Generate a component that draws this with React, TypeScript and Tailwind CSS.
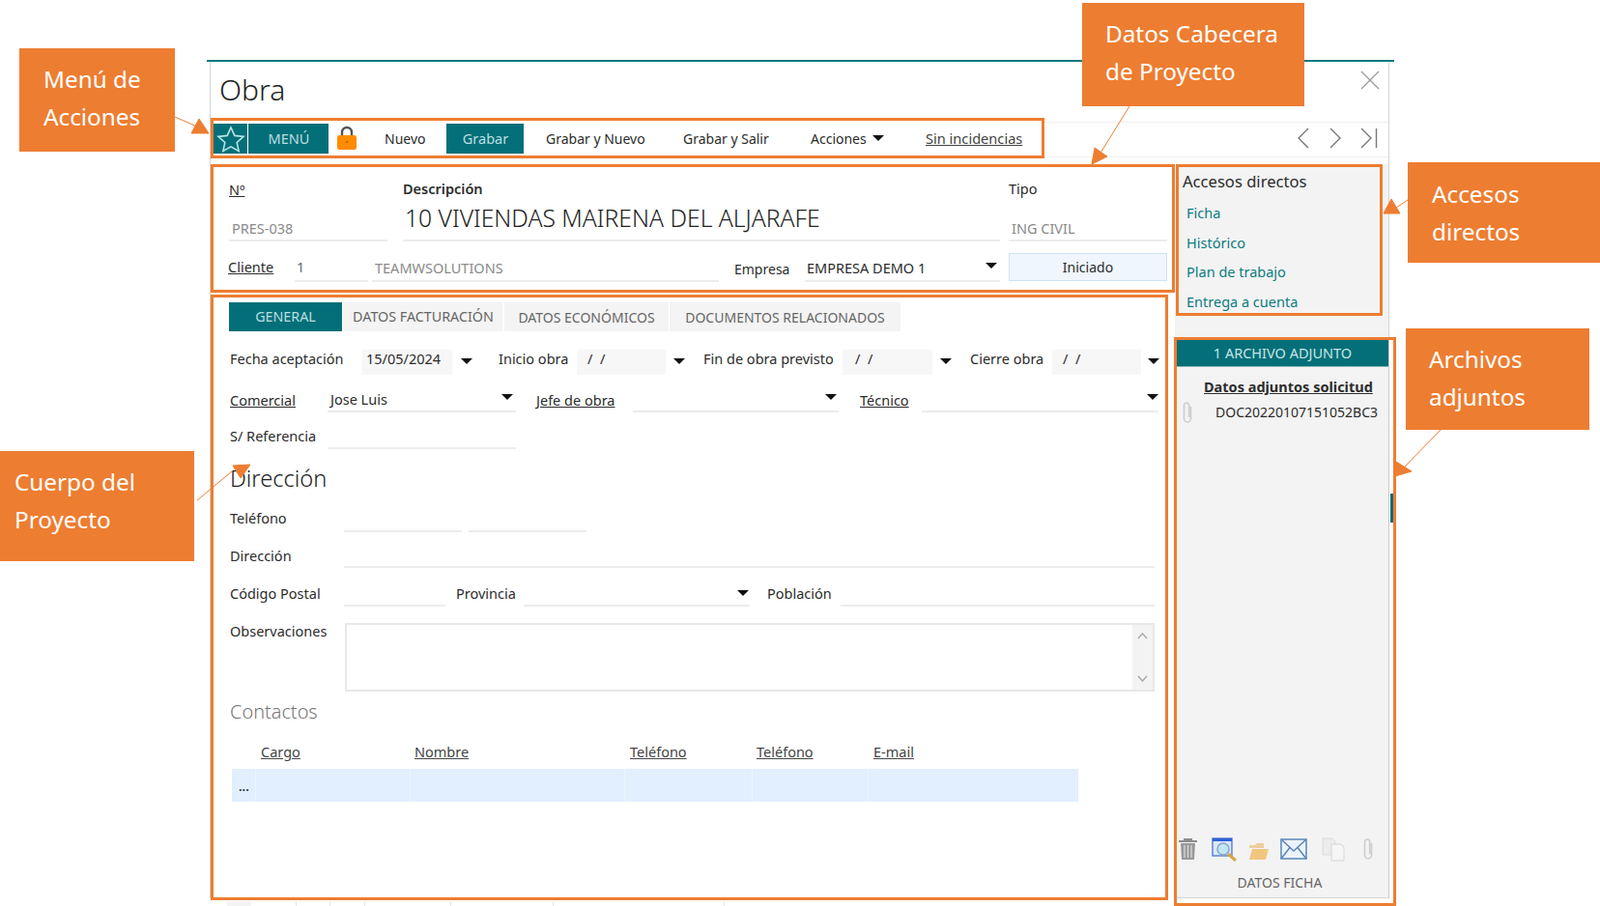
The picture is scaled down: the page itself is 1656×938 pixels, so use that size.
import React from "react";

const Tri = () => (
  <span className="block h-0 w-0 shrink-0 border-x-[6px] border-t-[6px] border-x-transparent border-t-[#111]" />
);

const Chevron = ({ d }: { d: string }) => (
  <svg width="16" height="22" viewBox="0 0 16 22" fill="none" stroke="#777" strokeWidth="1.4" className="block">
    <path d={d} />
  </svg>
);

const Clip = ({ className }: { className?: string }) => (
  <svg width="12" height="24" viewBox="0 0 12 24" fill="none" stroke="#cdcdcd" strokeWidth="1.6" className={className}>
    <path d="M9.5 6 V18 a3.500 4 0 0 1 -7 0 V5 a2.600 3 0 0 1 5.200 0 V17" />
  </svg>
);

const Arrows = () => (
  <svg className="pointer-events-none absolute left-0 top-0 z-20" width="1656" height="938" viewBox="0 0 1656 938">
    <g fill="#ed7d31" stroke="#ed7d31" strokeWidth="1">
      <line x1="181" y1="121" x2="204" y2="131" />
      <polygon points="198,138 216,138 206,123" />
      <line x1="1169" y1="110" x2="1138" y2="160" />
      <polygon points="1130,170 1146,162 1133,153" />
      <line x1="1457" y1="207" x2="1445" y2="215" />
      <polygon points="1432,221 1449,221 1440,206" />
      <line x1="1491" y1="445" x2="1454" y2="483" />
      <polygon points="1444,493 1461,488 1445,478" />
      <line x1="204" y1="518" x2="240" y2="488" />
      <polygon points="259,481 241,482 249,495" />
    </g>
  </svg>
);

export default function App() {
  return (
    <div className="relative h-[938px] w-[1656px] overflow-hidden bg-white font-['Open_Sans',sans-serif] text-[14.5px] text-[#2c2c2c]">
      {/* Callouts */}
      <div className="absolute left-[20px] top-[50px] z-20 h-[107px] w-[161px] bg-[#ed7d31] pl-[25px] pt-[12px] text-[24.3px] leading-[39px] text-white">
        Menú de<br />Acciones
      </div>
      <div className="absolute left-[1120px] top-[3px] z-20 h-[107px] w-[230px] bg-[#ed7d31] pl-[24px] pt-[12px] text-[24.3px] leading-[39px] text-white">
        Datos Cabecera<br />de Proyecto
      </div>
      <div className="absolute left-[1457px] top-[168px] z-20 h-[104px] w-[199px] bg-[#ed7d31] pl-[25px] pt-[13px] text-[24.3px] leading-[39px] text-white">
        Accesos<br />directos
      </div>
      <div className="absolute left-[1455px] top-[340px] z-20 h-[105px] w-[190px] bg-[#ed7d31] pl-[24px] pt-[12px] text-[24.3px] leading-[39px] text-white">
        Archivos<br />adjuntos
      </div>
      <div className="absolute left-0 top-[467px] z-20 h-[114px] w-[201px] bg-[#ed7d31] pl-[15px] pt-[12px] text-[24.3px] leading-[39px] text-white">
        Cuerpo del<br />Proyecto
      </div>
      <Arrows />

      {/* Window */}
      <div className="ml-[214px] pt-[62px]">
        <div className="h-[2px] w-[1229px] bg-[#0a7a80]" />
        <div className="ml-[3px] h-[866px] w-[1221px] border-x border-x-[#d4d4d4]">
          {/* Title */}
          <div className="flex h-[58px] items-start justify-between">
            <div className="pl-[9px] pt-[9px] text-[30px] font-light leading-[40px] text-[#222]">Obra</div>
            <svg width="20" height="20" viewBox="0 0 20 20" stroke="#999" strokeWidth="1.2" className="mr-[9px] mt-[9px]">
              <path d="M1 1 L19 19 M19 1 L1 19" />
            </svg>
          </div>

          {/* Toolbar row */}
          <div className="flex h-[42px] text-[14px]">
            <div className="flex h-[42px] w-[863px] items-start border-[3px] border-[#ed7d31] pt-[3px]">
              <div className="flex h-[31px] w-[35px] shrink-0 items-center justify-center bg-[#046f78]">
                <svg width="30" height="28" viewBox="0 0 30 28" fill="none" stroke="#b9e4e4" strokeWidth="1.6">
                  <path d="M15 2 L18.8 10.4 L28 11.4 L21.2 17.5 L23.1 26.4 L15 21.8 L6.9 26.4 L8.8 17.5 L2 11.4 L11.2 10.4 Z" />
                </svg>
              </div>
              <div className="ml-px flex h-[31px] w-[83px] shrink-0 items-center justify-center pl-px bg-[#046f78] text-[14.5px] text-[#b9dfe0]">MENÚ</div>
              <svg width="20" height="25" viewBox="0 0 20 25" className="ml-[9px] mt-[2px] shrink-0">
                <path d="M5 11 V7 a5 5 0 0 1 10 0 V11" fill="none" stroke="#555" strokeWidth="2.4" />
                <rect x="0" y="10" width="20" height="15" rx="2.5" fill="#ff8c00" />
                <circle cx="10" cy="17" r="1" fill="#a85a00" />
              </svg>
              <div className="ml-[29px] flex h-[31px] w-[64px] shrink-0 items-center">Nuevo</div>
              <div className="flex h-[31px] w-[80px] shrink-0 items-center justify-center pl-px bg-[#046f78] text-[14.5px] text-[#b9dfe0]">Grabar</div>
              <div className="ml-[23px] flex h-[31px] w-[104px] shrink-0 items-center whitespace-nowrap">Grabar y Nuevo</div>
              <div className="ml-[38px] flex h-[31px] w-[90px] shrink-0 items-center whitespace-nowrap">Grabar y Salir</div>
              <div className="ml-[42px] flex h-[31px] w-[77px] shrink-0 items-center gap-[6px]">
                <span>Acciones</span>
                <span className="mb-[2px]"><Tri /></span>
              </div>
              <div className="ml-[42px] flex h-[31px] items-center whitespace-nowrap text-[14.6px] text-[#444] underline">Sin incidencias</div>
            </div>
            <div className="mt-[4px] flex h-[37px] flex-1 items-center justify-end gap-[17px] border-y border-y-[#efefef] pb-[4px] pr-[11px]">
              <Chevron d="M13 1 L3 11 L13 21" />
              <Chevron d="M3 1 L13 11 L3 21" />
              <svg width="19" height="22" viewBox="0 0 19 22" fill="none" stroke="#777" strokeWidth="1.4">
                <path d="M2 1 L12 11 L2 21 M17.5 1 V21" />
              </svg>
            </div>
          </div>

          {/* Main */}
          <div className="mt-[6px] flex">
            <div className="w-[998px] shrink-0">
              {/* Header data */}
              <div className="h-[133px] border-[3px] border-[#ed7d31]">
                <div className="flex pl-[16px] pt-[13px]">
                  <div className="w-[164px] shrink-0">
                    <div className="h-[18px] pt-px leading-[18px] underline">Nº</div>
                    <div className="flex h-[46px] items-end border-b-2 border-b-[#ececec] pb-[2px] pl-[3px] leading-[20px] text-[#8a8a8a]">PRES-038</div>
                  </div>
                  <div className="ml-[16px] w-[618px] shrink-0">
                    <div className="h-[18px] font-semibold leading-[18px]">Descripción</div>
                    <div className="flex h-[46px] items-end whitespace-nowrap border-b-2 border-b-[#ececec] pb-[6px] pl-[2px] text-[24.7px] font-light leading-[32px] text-[#222]">10 VIVIENDAS MAIRENA DEL ALJARAFE</div>
                  </div>
                  <div className="ml-[9px] w-[164px] shrink-0">
                    <div className="h-[18px] leading-[18px]">Tipo</div>
                    <div className="flex h-[46px] items-end border-b-2 border-b-[#ececec] pb-[2px] pl-[3px] leading-[20px] text-[#8a8a8a]">ING CIVIL</div>
                  </div>
                </div>
                <div className="mt-[12px] flex h-[30px] items-start pl-[15px]">
                  <div className="flex h-[30px] w-[69px] shrink-0 items-center underline">Cliente</div>
                  <div className="flex h-[30px] w-[76px] shrink-0 items-center border-b-2 border-b-[#ececec] pl-[2px] pt-px text-[#666]">1</div>
                  <div className="ml-[4px] flex h-[30px] w-[359px] shrink-0 items-center border-b-2 border-b-[#ececec] pl-[3px] pt-[3px] text-[#8a8a8a]">TEAMWSOLUTIONS</div>
                  <div className="ml-[16px] flex h-[30px] w-[73px] shrink-0 items-center pt-[2px] text-[14px]">Empresa</div>
                  <div className="flex h-[30px] w-[202px] shrink-0 items-center justify-between border-b-2 border-b-[#ececec] pl-[2px] pr-[3px] pt-[3px]">
                    <span>EMPRESA DEMO 1</span>
                    <span className="mb-[5px]"><Tri /></span>
                  </div>
                  <div className="ml-[9px] flex h-[29px] w-[164px] shrink-0 items-center justify-center border border-[#cfe3f3] bg-[#eff6fd] text-[14px]">Iniciado</div>
                </div>
              </div>

              {/* Project body */}
              <div className="mt-[2px] h-[627px] w-[991px] border-[3px] border-[#ed7d31]">
                <div className="ml-[16px] mt-[5px] flex h-[30px] text-[14px] text-[#666]">
                  <div className="flex w-[117px] items-center justify-center bg-[#046f78] text-[14.3px] text-[#b9dfe0]">GENERAL</div>
                  <div className="ml-px flex w-[165px] items-center justify-center whitespace-nowrap bg-[#f4f4f4] pl-px text-[14.3px]">DATOS FACTURACIÓN</div>
                  <div className="ml-[2px] flex w-[170px] items-center justify-center whitespace-nowrap bg-[#f4f4f4]">DATOS ECONÓMICOS</div>
                  <div className="ml-px flex w-[239px] items-center justify-center whitespace-nowrap bg-[#f4f4f4]">DOCUMENTOS RELACIONADOS</div>
                </div>

                <div className="ml-[17px] mt-[19px] flex h-[26px] items-center">
                  <div className="w-[137px] shrink-0 whitespace-nowrap pb-[6px]">Fecha aceptación</div>
                  <div className="flex h-[26px] w-[93px] shrink-0 items-center whitespace-nowrap bg-[#f7f7f7] pb-[6px] pl-[4px]">15/05/2024</div>
                  <span className="mb-[2px] ml-[9px]"><Tri /></span>
                  <div className="ml-[27px] w-[81px] shrink-0 whitespace-nowrap pb-[6px]">Inicio obra</div>
                  <div className="flex h-[26px] w-[92px] shrink-0 items-center whitespace-pre bg-[#f7f7f7] pb-[6px] pl-[11px]">/  /</div>
                  <span className="mb-[2px] ml-[8px]"><Tri /></span>
                  <div className="ml-[19px] w-[144px] shrink-0 whitespace-nowrap pb-[6px]">Fin de obra previsto</div>
                  <div className="flex h-[26px] w-[93px] shrink-0 items-center whitespace-pre bg-[#f7f7f7] pb-[6px] pl-[13px]">/  /</div>
                  <span className="mb-[2px] ml-[8px]"><Tri /></span>
                  <div className="ml-[19px] w-[85px] shrink-0 whitespace-nowrap pb-[6px]">Cierre obra</div>
                  <div className="flex h-[26px] w-[92px] shrink-0 items-center whitespace-pre bg-[#f7f7f7] pb-[6px] pl-[11px]">/  /</div>
                  <span className="mb-[2px] ml-[7px]"><Tri /></span>
                </div>

                <div className="ml-[17px] mt-[14px] flex h-[25px] items-end">
                  <div className="w-[101px] shrink-0 pb-[3px] leading-[20px] underline">Comercial</div>
                  <div className="flex h-[25px] w-[195px] shrink-0 items-start justify-between border-b-2 border-b-[#ececec] pl-[3px] pr-[3px]">
                    <span className="pt-px leading-[20px]">Jose Luis</span>
                    <span className="mt-[6px]"><Tri /></span>
                  </div>
                  <div className="ml-[21px] w-[100px] shrink-0 pb-[3px] leading-[20px] underline">Jefe de obra</div>
                  <div className="flex h-[25px] w-[213px] shrink-0 justify-end border-b-2 border-b-[#ececec] pr-[2px] pt-[6px]"><Tri /></div>
                  <div className="ml-[22px] w-[64px] shrink-0 pb-[3px] leading-[20px] underline">Técnico</div>
                  <div className="flex h-[25px] w-[245px] shrink-0 justify-end border-b-2 border-b-[#ececec] pt-[6px]"><Tri /></div>
                </div>

                <div className="ml-[17px] mt-[13px] flex h-[25px] items-end">
                  <div className="w-[101px] shrink-0 pb-[4px] leading-[20px]">S/ Referencia</div>
                  <div className="h-[25px] w-[195px] shrink-0 border-b-2 border-b-[#ececec]" />
                </div>

                <div className="ml-[17px] mt-[12px] h-[36px] text-[23.7px] font-light leading-[36px] text-[#222]">Dirección</div>

                <div className="ml-[17px] flex h-[38px] items-end">
                  <div className="w-[118px] shrink-0 pb-[5px] leading-[20px]">Teléfono</div>
                  <div className="h-[20px] w-[122px] shrink-0 border-b-2 border-b-[#ececec]" />
                  <div className="ml-[7px] h-[20px] w-[122px] shrink-0 border-b-2 border-b-[#ececec]" />
                </div>

                <div className="ml-[17px] flex h-[37px] items-end">
                  <div className="w-[118px] shrink-0 pb-[3px] leading-[20px]">Dirección</div>
                  <div className="h-[20px] w-[839px] shrink-0 border-b-2 border-b-[#ececec]" />
                </div>

                <div className="ml-[17px] flex h-[40px] items-end">
                  <div className="w-[118px] shrink-0 pb-[4px] leading-[20px]">Código Postal</div>
                  <div className="h-[20px] w-[105px] shrink-0 border-b-2 border-b-[#ececec]" />
                  <div className="ml-[11px] w-[70px] shrink-0 pb-[4px] leading-[20px]">Provincia</div>
                  <div className="flex h-[25px] w-[234px] shrink-0 justify-end border-b-2 border-b-[#ececec] pr-[1px] pt-[8px]"><Tri /></div>
                  <div className="ml-[18px] w-[76px] shrink-0 pb-[4px] leading-[20px]">Población</div>
                  <div className="h-[20px] w-[325px] shrink-0 border-b-2 border-b-[#ececec]" />
                </div>

                <div className="ml-[17px] mt-[17px] flex h-[71px] items-start">
                  <div className="-mt-[2px] w-[119px] shrink-0 leading-[20px]">Observaciones</div>
                  <div className="flex h-[71px] w-[838px] shrink-0 justify-end border-2 border-[#e8e8e8] bg-white">
                    <div className="flex w-[21px] flex-col items-center justify-between bg-[#f3f3f3] py-[8px]">
                      <svg width="11" height="7" viewBox="0 0 11 7" fill="none" stroke="#aaa" strokeWidth="1.5"><path d="M1 6 L5.5 1 L10 6" /></svg>
                      <svg width="11" height="7" viewBox="0 0 11 7" fill="none" stroke="#aaa" strokeWidth="1.5"><path d="M1 1 L5.5 6 L10 1" /></svg>
                    </div>
                  </div>
                </div>

                <div className="ml-[17px] mt-[10px] h-[22px] text-[19.9px] font-light leading-[22px] text-[#777]">Contactos</div>

                <div className="ml-[19px] mt-[20px] grid h-[20px] w-[876px] grid-cols-[25px_160px_222px_132px_120px_217px] leading-[20px] text-[#444] underline">
                  <div />
                  <div className="pl-[5px]">Cargo</div>
                  <div className="pl-[4px]">Nombre</div>
                  <div className="pl-[5px]">Teléfono</div>
                  <div className="pl-[4px]">Teléfono</div>
                  <div className="pl-[5px]">E-mail</div>
                </div>
                <div className="ml-[19px] mt-[8px] grid h-[34px] w-[876px] grid-cols-[25px_160px_222px_132px_120px_217px] bg-[#e1effe]">
                  <div className="border-r border-r-[#edf5fe] pl-[7px] pt-[8px] text-[13px] font-semibold leading-[20px]">...</div>
                  <div className="border-r border-r-[#edf5fe]" />
                  <div className="border-r border-r-[#edf5fe]" />
                  <div className="border-r border-r-[#edf5fe]" />
                  <div className="border-r border-r-[#edf5fe]" />
                  <div />
                </div>
              </div>

              {/* Edge of the page behind the window */}
              <div className="ml-[17px] mt-px flex h-[5px] w-[532px]">
                <div className="h-[5px] w-[25px] shrink-0 bg-[#f3f3f3]" />
                <div className="ml-[46px] h-[5px] w-[36px] shrink-0 border-x border-x-[#e6e6e6]" />
                <div className="h-[5px] w-[36px] shrink-0 border-r border-r-[#e6e6e6]" />
                <div className="h-[5px] w-[89px] shrink-0 border-r border-r-[#e6e6e6]" />
                <div className="h-[5px] w-[106px] shrink-0 border-r border-r-[#e6e6e6]" />
                <div className="h-[5px] w-[177px] shrink-0 border-r border-r-[#e6e6e6]" />
              </div>
            </div>

            {/* Right column */}
            <div className="h-[760px] w-[221px] shrink-0 bg-[#f3f3f3]">
              <div className="ml-px h-[157px] w-[214px] border-[3px] border-[#ed7d31]">
                <div className="ml-[4px] mt-[5px] h-[20px] whitespace-nowrap text-[16.6px] leading-[20px]">Accesos directos</div>
                <div className="ml-[8px] mt-[7px] flex flex-col text-[#0c7c80]">
                  <div className="flex h-[31px] items-center">Ficha</div>
                  <div className="flex h-[31px] items-center">Histórico</div>
                  <div className="flex h-[30.5px] items-center">Plan de trabajo</div>
                  <div className="flex h-[30.5px] items-center">Entrega a cuenta</div>
                </div>
              </div>

              <div className="-ml-px mt-[22px] flex h-[589px] w-[230px] border-[3px] border-[#ed7d31] bg-white">
                <div className="flex h-[578px] w-[219px] shrink-0 flex-col border-b border-b-[#d4d4d4] bg-[#f3f3f3]">
                  <div className="flex h-[28px] shrink-0 items-center justify-center border-b border-b-[#7fb5b9] bg-[#046f78] text-[#c7e4e5]">1 ARCHIVO ADJUNTO</div>
                  <div className="mt-[10px] pl-[28px] font-['Liberation_Sans',sans-serif] text-[14.5px] font-bold leading-[20px] underline">Datos adjuntos solicitud</div>
                  <div className="mt-[4px] flex h-[24px] items-center pl-[5px]">
                    <Clip className="mt-[2px] shrink-0" />
                    <span className="ml-[23px] whitespace-nowrap text-[14px]">DOC20220107151052BC3</span>
                  </div>
                  <div className="mt-auto flex h-[26px] items-center pl-[1px]">
                    <svg width="21" height="23" viewBox="0 0 21 23" className="shrink-0">
                      <path d="M1 3 H20 M7 3 V1 H14 V3" fill="none" stroke="#8c8c8c" strokeWidth="2" />
                      <path d="M3 5 H18 L17 22 H4 Z" fill="#999" />
                      <path d="M7 7 V20 M10.500 7 V20 M14 7 V20" stroke="#ddd" strokeWidth="1.2" />
                    </svg>
                    <svg width="28" height="25" viewBox="0 0 28 25" className="ml-[14px] shrink-0">
                      <rect x="1" y="1" width="20" height="18" fill="#dbe7fb" stroke="#5f86cf" strokeWidth="1.5" />
                      <rect x="1" y="1" width="20" height="3" fill="#2c62d6" />
                      <circle cx="12" cy="12" r="6" fill="#bfe6f5" stroke="#8aa6c8" strokeWidth="1.5" />
                      <path d="M17 17 L25 24" stroke="#d9a544" strokeWidth="3" />
                    </svg>
                    <svg width="22" height="19" viewBox="0 0 22 19" className="ml-[9px] mt-[4px] shrink-0">
                      <path d="M2 18 V3 H8 L10 1 H17 V6 H2" fill="#eccf9c" />
                      <path d="M2 18 L5 7 H22 L19 18 Z" fill="#f1c67f" />
                    </svg>
                    <svg width="28" height="22" viewBox="0 0 28 22" fill="none" stroke="#5a86b8" strokeWidth="1.5" className="ml-[12px] shrink-0">
                      <rect x="1" y="1" width="26" height="20" fill="#edf3fa" />
                      <path d="M1 1 L14 13 L27 1 M1 21 L10 9.500 M27 21 L18 9.500" />
                    </svg>
                    <svg width="24" height="25" viewBox="0 0 24 25" className="ml-[15px] shrink-0">
                      <path d="M1 1 H11 L14 4 V18 H1 Z" fill="#ececec" stroke="#dcdcdc" />
                      <path d="M10 7 H20 L23 10 V24 H10 Z" fill="#f5f5f5" stroke="#d6d6d6" />
                    </svg>
                    <Clip className="ml-[18px] shrink-0" />
                  </div>
                  <div className="mb-[5px] mt-[12px] pr-[6px] text-center font-['Liberation_Sans',sans-serif] text-[14px] leading-[20px] text-[#666]">DATOS FICHA</div>
                </div>
                <div className="h-[578px] flex-1 border-l border-l-[#c8c8c8]">
                  <div className="ml-px mt-[159px] h-[30px] w-[3px] bg-[#046f78]" />
                </div>
              </div>
            </div>
          </div>
        </div>
      </div>
    </div>
  );
}
